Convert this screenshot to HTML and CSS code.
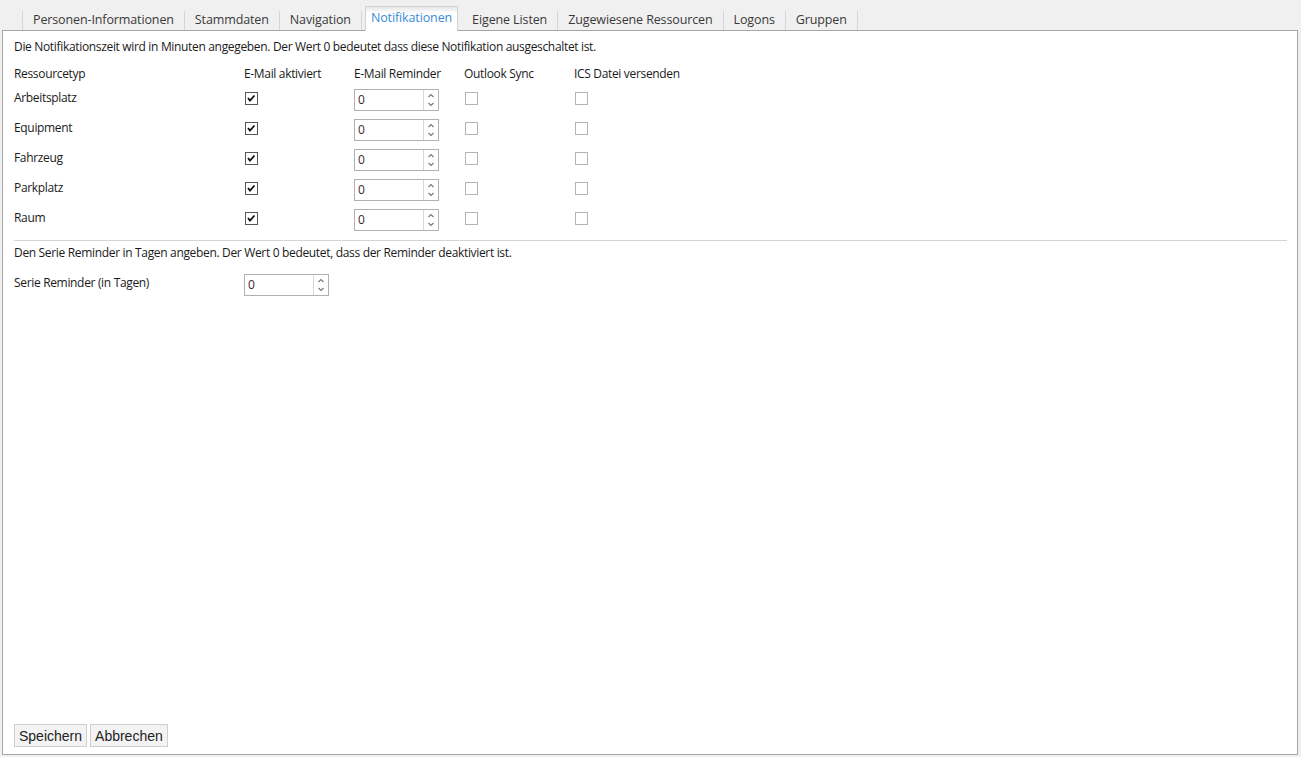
FILE: index.html
```html
<!DOCTYPE html>
<html lang="de">
<head>
<meta charset="utf-8">
<title>Notifikationen</title>
<link rel="stylesheet" href="styles.css">
</head>
<body>
<div class="app">
  <nav class="tabs">
    <div class="tab first">Personen-Informationen</div>
    <div class="tab">Stammdaten</div>
    <div class="tab">Navigation</div>
    <div class="tab active">Notifikationen</div>
    <div class="tab">Eigene Listen</div>
    <div class="tab">Zugewiesene Ressourcen</div>
    <div class="tab">Logons</div>
    <div class="tab">Gruppen</div>
  </nav>
  <main class="panel">
    <p class="intro">Die Notifikationszeit wird in Minuten angegeben. Der Wert 0 bedeutet dass diese Notifikation ausgeschaltet ist.</p>
    <div class="grid head">
      <div>Ressourcetyp</div>
      <div>E-Mail aktiviert</div>
      <div>E-Mail Reminder</div>
      <div>Outlook Sync</div>
      <div>ICS Datei versenden</div>
    </div>

    <div class="grid row">
      <div class="label">Arbeitsplatz</div>
      <div><span class="cb checked"><svg viewBox="0 0 10 10" width="10" height="10"><path d="M2 5 L4 7.5 L8.5 2.5" fill="none" stroke="#111" stroke-width="1.8"/></svg></span></div>
      <div><span class="spin"><span class="val">0</span><span class="arrows"><svg viewBox="0 0 8 18" width="8" height="18"><path d="M1.5 6 L4 3.5 L6.5 6" fill="none" stroke="#777" stroke-width="1.1"/><path d="M1.5 12 L4 14.5 L6.5 12" fill="none" stroke="#777" stroke-width="1.1"/></svg></span></span></div>
      <div><span class="cb"></span></div>
      <div><span class="cb"></span></div>
    </div>
    <div class="grid row">
      <div class="label">Equipment</div>
      <div><span class="cb checked"><svg viewBox="0 0 10 10" width="10" height="10"><path d="M2 5 L4 7.5 L8.5 2.5" fill="none" stroke="#111" stroke-width="1.8"/></svg></span></div>
      <div><span class="spin"><span class="val">0</span><span class="arrows"><svg viewBox="0 0 8 18" width="8" height="18"><path d="M1.5 6 L4 3.5 L6.5 6" fill="none" stroke="#777" stroke-width="1.1"/><path d="M1.5 12 L4 14.5 L6.5 12" fill="none" stroke="#777" stroke-width="1.1"/></svg></span></span></div>
      <div><span class="cb"></span></div>
      <div><span class="cb"></span></div>
    </div>
    <div class="grid row">
      <div class="label">Fahrzeug</div>
      <div><span class="cb checked"><svg viewBox="0 0 10 10" width="10" height="10"><path d="M2 5 L4 7.5 L8.5 2.5" fill="none" stroke="#111" stroke-width="1.8"/></svg></span></div>
      <div><span class="spin"><span class="val">0</span><span class="arrows"><svg viewBox="0 0 8 18" width="8" height="18"><path d="M1.5 6 L4 3.5 L6.5 6" fill="none" stroke="#777" stroke-width="1.1"/><path d="M1.5 12 L4 14.5 L6.5 12" fill="none" stroke="#777" stroke-width="1.1"/></svg></span></span></div>
      <div><span class="cb"></span></div>
      <div><span class="cb"></span></div>
    </div>
    <div class="grid row">
      <div class="label">Parkplatz</div>
      <div><span class="cb checked"><svg viewBox="0 0 10 10" width="10" height="10"><path d="M2 5 L4 7.5 L8.5 2.5" fill="none" stroke="#111" stroke-width="1.8"/></svg></span></div>
      <div><span class="spin"><span class="val">0</span><span class="arrows"><svg viewBox="0 0 8 18" width="8" height="18"><path d="M1.5 6 L4 3.5 L6.5 6" fill="none" stroke="#777" stroke-width="1.1"/><path d="M1.5 12 L4 14.5 L6.5 12" fill="none" stroke="#777" stroke-width="1.1"/></svg></span></span></div>
      <div><span class="cb"></span></div>
      <div><span class="cb"></span></div>
    </div>
    <div class="grid row">
      <div class="label">Raum</div>
      <div><span class="cb checked"><svg viewBox="0 0 10 10" width="10" height="10"><path d="M2 5 L4 7.5 L8.5 2.5" fill="none" stroke="#111" stroke-width="1.8"/></svg></span></div>
      <div><span class="spin"><span class="val">0</span><span class="arrows"><svg viewBox="0 0 8 18" width="8" height="18"><path d="M1.5 6 L4 3.5 L6.5 6" fill="none" stroke="#777" stroke-width="1.1"/><path d="M1.5 12 L4 14.5 L6.5 12" fill="none" stroke="#777" stroke-width="1.1"/></svg></span></span></div>
      <div><span class="cb"></span></div>
      <div><span class="cb"></span></div>
    </div>

    <hr class="sep">
    <p class="intro2">Den Serie Reminder in Tagen angeben. Der Wert 0 bedeutet, dass der Reminder deaktiviert ist.</p>
    <div class="grid serie">
      <div class="label">Serie Reminder (in Tagen)</div>
      <div><span class="spin"><span class="val">0</span><span class="arrows"><svg viewBox="0 0 8 18" width="8" height="18"><path d="M1.5 6 L4 3.5 L6.5 6" fill="none" stroke="#777" stroke-width="1.1"/><path d="M1.5 12 L4 14.5 L6.5 12" fill="none" stroke="#777" stroke-width="1.1"/></svg></span></span></div>
    </div>

    <div class="buttons">
      <button class="btn btn-save">Speichern</button>
      <button class="btn btn-cancel">Abbrechen</button>
    </div>
  </main>
</div>
</body>
</html>
```

FILE: styles.css
```css
html, body {
  margin: 0;
  padding: 0;
  background: #f0f0f0;
}
body {
  font-family: "Open Sans", "Noto Sans", sans-serif;
  font-size: 12px;
  letter-spacing: -0.33px;
  color: #1a1a1a;
}
.app {
  width: 1301px;
  height: 757px;
  display: flex;
  flex-direction: column;
}
.tabs {
  height: 30px;
  display: flex;
  align-items: flex-end;
  padding-left: 22px;
  box-sizing: border-box;
}
.tab {
  height: 19px;
  line-height: 18px;
  padding: 0 10px;
  border-right: 1px solid #d6d6d6;
  font-size: 12.5px;
  letter-spacing: -0.12px;
  color: #3a3a3a;
  white-space: nowrap;
}
.tab.first {
  border-left: 1px solid #d6d6d6;
}
.tab.active {
  height: 24px;
  line-height: 22px;
  margin: 0 4px -1px 3px;
  padding: 0 5px;
  background: linear-gradient(#e6e6e6, #ffffff 6px);
  border: 1px solid #d2d2d2;
  border-bottom: none;
  color: #3b8bd8;
  position: relative;
  z-index: 1;
}
.panel {
  margin-left: 2px;
  width: 1296px;
  height: 725px;
  box-sizing: border-box;
  border: 1px solid #a6a6a6;
  background: #ffffff;
  padding: 8px 10px 7px 11px;
  display: flex;
  flex-direction: column;
}
.intro, .intro2 {
  margin: 0;
  line-height: 16px;
}
.grid {
  display: grid;
  grid-template-columns: 230px 110px 110px 110px auto;
}
.head {
  margin-top: 11px;
  line-height: 16px;
  height: 19px;
}
.row {
  height: 30px;
}
.row .label {
  padding-top: 5px;
  line-height: 16px;
}
.cb {
  display: block;
  width: 11px;
  height: 11px;
  margin: 7px 0 0 1px;
  border: 1px solid #b4b4b4;
  background: #fff;
  position: relative;
}
.cb.checked {
  border-color: #555;
}
.cb svg {
  position: absolute;
  left: 0;
  top: 0;
}
.spin {
  display: flex;
  width: 85px;
  height: 22px;
  margin-top: 4px;
  box-sizing: border-box;
  border: 1px solid #b0b0b0;
  background: #fff;
}
.val {
  flex: 1;
  padding-left: 3px;
  line-height: 20px;
  color: #3a2a2a;
}
.arrows {
  width: 14px;
  border-left: 1px solid #d8d8d8;
  display: flex;
  align-items: center;
  justify-content: center;
}
.sep {
  margin: 5px 0 0 0;
  border: none;
  border-top: 1px solid #d4d4d4;
  height: 0;
}
.intro2 {
  margin-top: 4px;
}
.serie {
  margin-top: 9px;
  grid-template-columns: 230px auto;
}
.serie .label {
  padding-top: 5px;
  line-height: 16px;
}
.buttons {
  margin-top: auto;
  display: flex;
  gap: 3px;
}
.btn {
  font-family: "Liberation Sans", Arial, sans-serif;
  font-size: 14px;
  letter-spacing: 0;
  height: 23px;
  padding: 0 4px;
  margin: 0;
  background: #f3f3f3;
  border: 1px solid #cfcfcf;
  color: #222;
  line-height: 20px;
}
```
